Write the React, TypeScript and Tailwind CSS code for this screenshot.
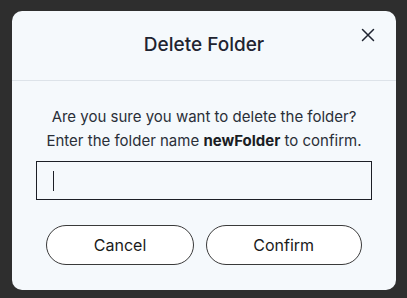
import React from "react";

export default function App() {
  return (
    <div
      className="w-[407px] h-[298px] bg-[#2e2e2e] pt-[11px] pl-[12px]"
      style={{ fontFamily: "Inter, 'Noto Sans', sans-serif" }}
    >
      <div className="w-[384px] h-[279px] bg-[#f5f9fc] rounded-[10px] flex flex-col">
        <div className="relative h-[70px] border-b border-[#dde3e9] flex items-center justify-center">
          <h2 className="text-[19px] font-medium text-[#1f2430]">Delete Folder</h2>
          <button className="absolute right-[20px] top-[16px] w-[16px] h-[16px] flex items-center justify-center text-[#1f2430]">
            <svg width="14" height="14" viewBox="0 0 14 14" fill="none" stroke="currentColor" strokeWidth="1.5" strokeLinecap="round">
              <path d="M1.5 1.5 L12.5 12.5 M12.5 1.5 L1.5 12.5" />
            </svg>
          </button>
        </div>
        <div className="flex flex-col items-center pt-[24px]">
          <p className="text-[15px] leading-[24px] text-[#2a2f38] text-center">
            Are you sure you want to delete the folder?
            <br />
            Enter the folder name <span className="font-bold text-[#1a1d24]">newFolder</span> to confirm.
          </p>
          <div className="mt-[8px] w-[336px] h-[39px] border-[1.5px] border-[#1c1f26] flex items-center pl-[16px]">
            <div className="w-[1px] h-[20px] bg-[#1c1f26]" />
          </div>
          <div className="mt-[25px] flex gap-[12px]">
            <button className="h-[40px] px-[46.5px] rounded-full border border-[#3a3a3a] bg-white text-[16px] text-[#1a1a1a]">
              Cancel
            </button>
            <button className="h-[40px] px-[46.5px] rounded-full border border-[#3a3a3a] bg-white text-[16px] text-[#1a1a1a]">
              Confirm
            </button>
          </div>
        </div>
      </div>
    </div>
  );
}
